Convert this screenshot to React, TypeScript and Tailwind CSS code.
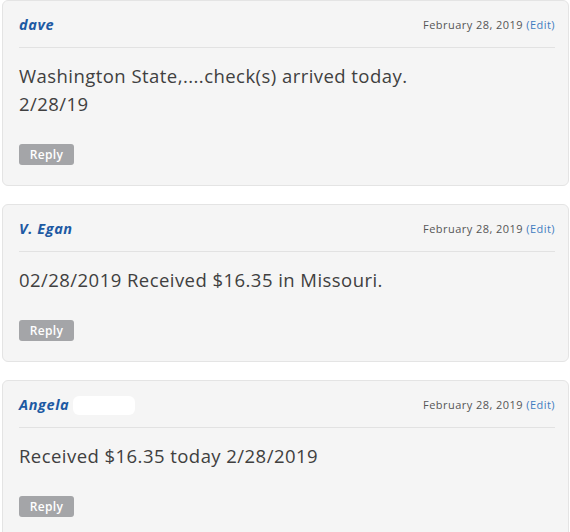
import React from "react";

type C = { name: string; body: string[]; redact?: boolean };

const comments: C[] = [
  { name: "dave", body: ["Washington State,....check(s) arrived today.", "2/28/19"] },
  { name: "V. Egan", body: ["02/28/2019 Received $16.35 in Missouri."] },
  { name: "Angela", body: ["Received $16.35 today 2/28/2019"], redact: true },
];

function Card({ c }: { c: C }) {
  return (
    <div className="ml-[2px] w-[567px] rounded-[6px] border border-[#e4e4e4] bg-[#f5f5f5] pl-4 pr-3 pt-[14px] pb-[20px]">
      <div className="flex items-center justify-between border-b border-[#e2e2e2] pb-[12px] mr-[1px]">
        <div className="flex items-center">
          <span className="text-[14.5px] leading-[20px] font-bold italic tracking-[0.6px] text-[#1d5aa3]">{c.name}</span>
          {c.redact && <span className="ml-[4px] h-[19px] w-[62px] rounded-[6px] bg-white" />}
        </div>
        <div className="text-[11px] leading-[20px] tracking-[0.45px] text-[#555]">
          February 28, 2019 <span className="text-[#3f7cc0]">(Edit)</span>
        </div>
      </div>
      <div className="mt-[14px] text-[18.5px] leading-[28px] tracking-[0.45px] text-[#404040]">
        {c.body.map((l, i) => (
          <div key={i}>{l}</div>
        ))}
      </div>
      <button className="mt-[26px] flex h-[21px] w-[55px] items-center justify-center rounded-[3px] bg-[#a4a5a8] text-[12px] font-semibold tracking-[0.3px] text-white">
        Reply
      </button>
    </div>
  );
}

export default function App() {
  return (
    <div className="min-h-[532px] bg-white pt-0" style={{ fontFamily: '"Open Sans", "Noto Sans", sans-serif' }}>
      <div className="flex flex-col gap-[18px]">
        {comments.map((c, i) => (
          <Card key={i} c={c} />
        ))}
      </div>
    </div>
  );
}
